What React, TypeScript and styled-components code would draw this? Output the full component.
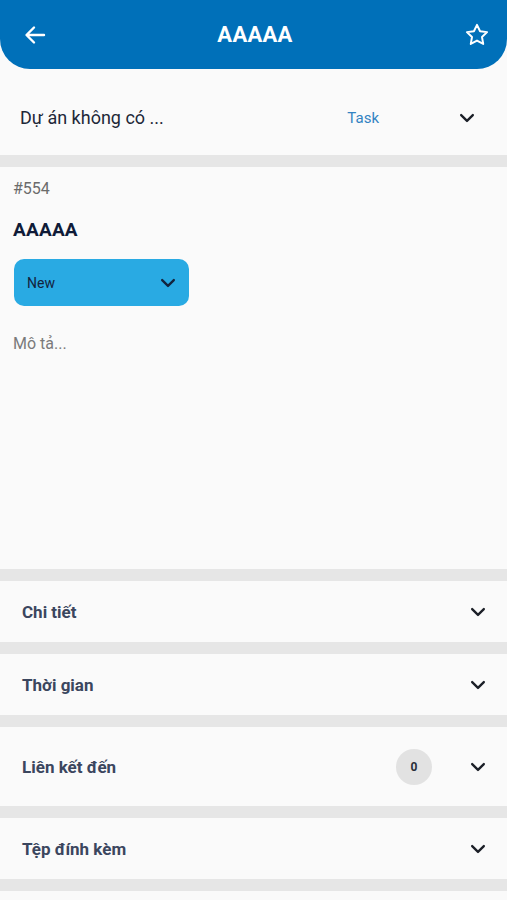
import React from "react";
import styled, { createGlobalStyle } from "styled-components";

const Global = createGlobalStyle`
  html, body { margin: 0; padding: 0; background: #e6e6e6; }
  body { font-family: Roboto, "Noto Sans", "Liberation Sans", sans-serif; }
  * { box-sizing: border-box; }
`;

const Page = styled.div`
  width: 507px;
  height: 900px;
  overflow: hidden;
  display: flex;
  flex-direction: column;
  background: #e6e6e6;
`;

const Header = styled.header`
  height: 69px;
  flex-shrink: 0;
  background: #0070b9;
  border-radius: 0 0 30px 30px;
  display: flex;
  align-items: center;
  justify-content: space-between;
  padding: 0 17px 0 22px;
  position: relative;
  z-index: 1;
`;

const HeaderTitle = styled.h1`
  margin: 0;
  font-size: 22px;
  font-weight: 700;
  color: #ffffff;
  letter-spacing: 0.3px;
  padding-right: 2px;
`;

const IconButton = styled.div`
  width: 26px;
  height: 26px;
  display: flex;
  align-items: center;
  justify-content: center;
`;

const ProjectRow = styled.div`
  margin-top: -69px;
  padding-top: 80px;
  height: 155px;
  flex-shrink: 0;
  background: #fafafa;
  display: flex;
  align-items: center;
  padding-left: 20px;
  padding-right: 30px;
`;

const ProjectName = styled.span`
  font-size: 18px;
  color: #1e2838;
  flex: 1;
`;

const TaskType = styled.span`
  font-size: 15px;
  color: #3383c2;
  margin-right: 78px;
`;

const Card = styled.section<{ $h: number; $gap?: number }>`
  height: ${(p) => p.$h}px;
  flex-shrink: 0;
  background: #fafafa;
  margin-top: ${(p) => p.$gap ?? 12}px;
`;

const MainCard = styled(Card)`
  padding: 12px 14px 0 13px;
  display: flex;
  flex-direction: column;
`;

const TaskNumber = styled.div`
  font-size: 16px;
  color: #6b6b6b;
  line-height: 20px;
`;

const TaskTitle = styled.div`
  margin-top: 19px;
  font-size: 19px;
  font-weight: 700;
  color: #0f1b38;
  line-height: 24px;
  letter-spacing: 0.2px;
`;

const StatusSelect = styled.div`
  margin-top: 17px;
  margin-left: 1px;
  width: 175px;
  height: 47px;
  border-radius: 10px;
  background: #29aae3;
  display: flex;
  align-items: center;
  justify-content: space-between;
  padding: 0 11px 0 13px;
`;

const StatusText = styled.span`
  font-size: 14px;
  color: #13233d;
`;

const Description = styled.div`
  margin-top: 28px;
  font-size: 16px;
  color: #7a7a7a;
`;

const SectionRow = styled(Card)`
  display: flex;
  align-items: center;
  padding: 0 19px 0 22px;
`;

const SectionTitle = styled.span`
  flex: 1;
  font-size: 17px;
  font-weight: 700;
  color: #3b465e;
`;

const Badge = styled.span`
  width: 36px;
  height: 36px;
  border-radius: 50%;
  background: #e2e2e2;
  display: flex;
  align-items: center;
  justify-content: center;
  font-size: 12px;
  font-weight: 700;
  color: #2a2f3a;
  margin-right: 36px;
`;

const Filler = styled.div`
  flex: 1;
  background: #fafafa;
  margin-top: 12px;
`;

const Chevron = ({ size = 18, color = "#1b1f27" }: { size?: number; color?: string }) => (
  <svg width={size} height={size} viewBox="0 0 24 24" fill="none">
    <path d="M5 8.5l7 7 7-7" stroke={color} strokeWidth={2.8} strokeLinecap="round" strokeLinejoin="round" />
  </svg>
);

const sections: { title: string; h: number; badge?: string }[] = [
  { title: "Chi tiết", h: 61 },
  { title: "Thời gian", h: 61 },
  { title: "Liên kết đến", h: 79, badge: "0" },
  { title: "Tệp đính kèm", h: 61 },
];

export default function App() {
  return (
    <Page>
      <Global />
      <Header>
        <IconButton>
          <svg width="24" height="24" viewBox="0 0 24 24" fill="none">
            <path d="M21 12H4M11 4.5L3.5 12l7.5 7.5" stroke="#fff" strokeWidth={2.4} strokeLinecap="round" strokeLinejoin="round" />
          </svg>
        </IconButton>
        <HeaderTitle>AAAAA</HeaderTitle>
        <IconButton>
          <svg width="26" height="26" viewBox="0 0 24 24" fill="none">
            <path
              d="M12 2.6l2.85 5.9 6.45.85-4.7 4.5 1.15 6.4L12 17.15 6.25 20.25 7.4 13.85 2.7 9.35l6.45-.85z"
              stroke="#fff"
              strokeWidth={1.8}
              strokeLinejoin="round"
            />
          </svg>
        </IconButton>
      </Header>
      <ProjectRow>
        <ProjectName>Dự án không có ...</ProjectName>
        <TaskType>Task</TaskType>
        <Chevron size={20} />
      </ProjectRow>
      <MainCard $h={402}>
        <TaskNumber>#554</TaskNumber>
        <TaskTitle>AAAAA</TaskTitle>
        <StatusSelect>
          <StatusText>New</StatusText>
          <Chevron size={20} color="#13233d" />
        </StatusSelect>
        <Description>Mô tả...</Description>
      </MainCard>
      {sections.map((s) => (
        <SectionRow key={s.title} $h={s.h}>
          <SectionTitle>{s.title}</SectionTitle>
          {s.badge && <Badge>{s.badge}</Badge>}
          <Chevron size={20} />
        </SectionRow>
      ))}
      <Filler />
    </Page>
  );
}
